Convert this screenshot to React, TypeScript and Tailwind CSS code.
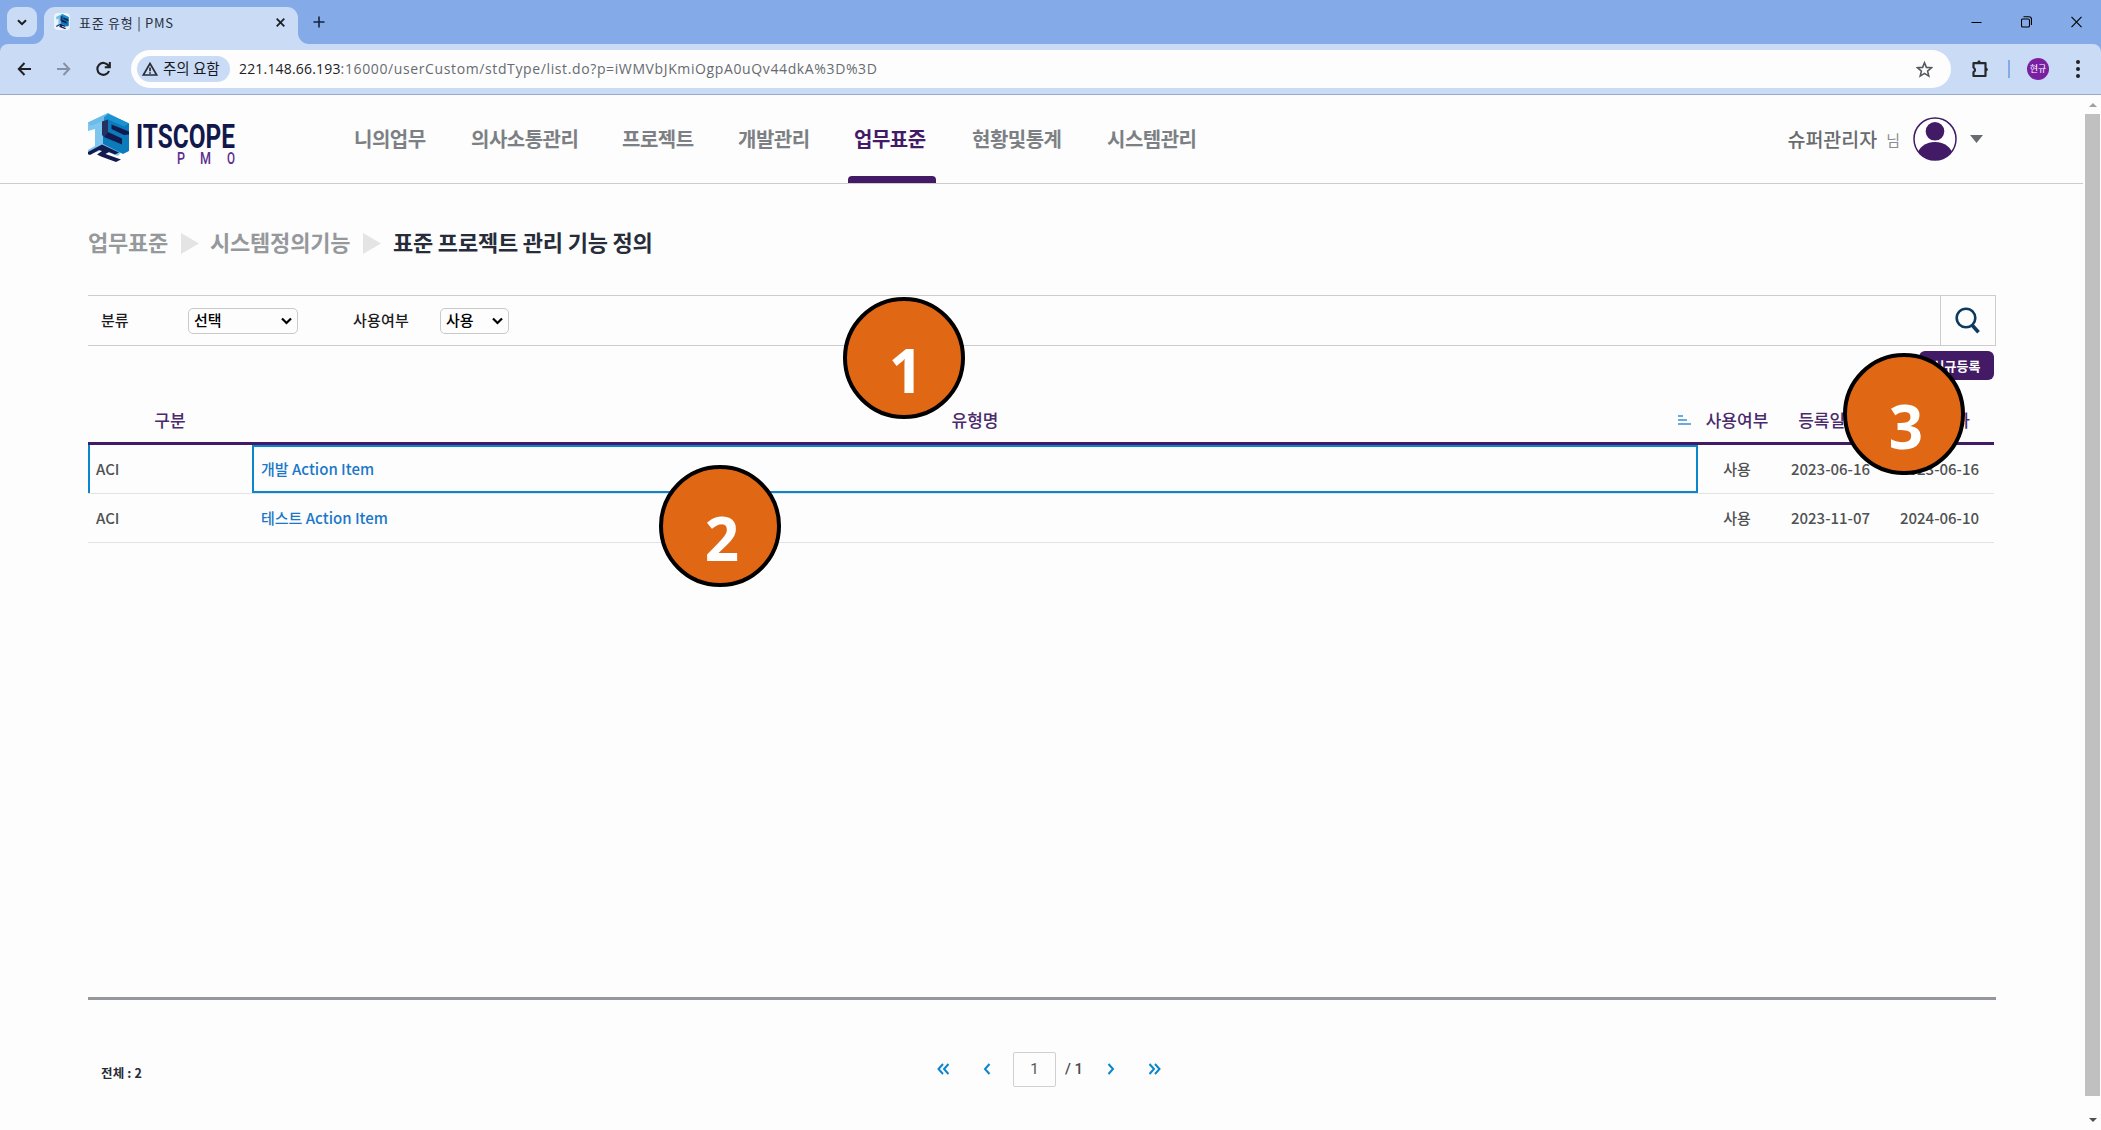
import React from "react";

const KR = "font-['Noto_Sans_CJK_KR',sans-serif]";

const navItems = [
  { label: "니의업무", width: "w-[117px]" },
  { label: "의사소통관리", width: "w-[151px]" },
  { label: "프로젝트", width: "w-[116px]" },
  { label: "개발관리", width: "w-[116px]" },
  { label: "업무표준", width: "w-[118px]", active: true },
  { label: "현황및통계", width: "w-[135px]" },
  { label: "시스템관리", width: "w-[135px]" },
];

const rows = [
  { type: "ACI", name: "개발 Action Item", use: "사용", created: "2023-06-16", updated: "2023-06-16", selected: true },
  { type: "ACI", name: "테스트 Action Item", use: "사용", created: "2023-11-07", updated: "2024-06-10" },
];

function LogoMark({ className }: { className: string }) {
  return (
    <svg className={className} viewBox="0 0 41 49">
      <path d="M0 9.5L20 0L24 3L15 9V31L24 34L34 38L30 43L14 37L0 42V37L7 33V16L0 18Z" fill="#7fc6ef" />
      <path d="M0 9.5L20 0L41 10.5L36 13L20 5.5L3 13Z" fill="#6dbbe9" />
      <path d="M20 1L41 10.5V19L33 16L41 20V38L35 41L15 31V9Z" fill="#0b7bbb" />
      <path d="M20 1L41 10.5L36 13.5L20 6.5L16 8.5V4Z" fill="#1b93d2" />
      <path d="M14 8.5L20 6.5V19L16 24L14 22Z" fill="#27315f" />
      <path d="M23.5 11.5L41 18.5V21.5L36 22L23.5 16Z" fill="#131a50" />
      <path d="M16 24L20 19L34 25.5V31.5L16 24Z" fill="#131a50" />
      <path d="M0 39L14 31.5L31 39.5L27 41.5L21 39L17.5 41L33 46.5L28 49L13 43.5L9 41.5L14 38L11 37L2 42L0 41Z" fill="#131a50" />
    </svg>
  );
}

function Select({ value, className }: { value: string; className: string }) {
  return (
    <div className={`flex h-[26px] items-center justify-between rounded-[5px] border border-[#c9c9c9] pl-[5px] pr-[5px] text-[15px] tracking-[-0.1px] text-black ${className}`}>
      <span>{value}</span>
      <svg width="11" height="8" viewBox="0 0 11 8" fill="none" stroke="#000" strokeWidth="2.2">
        <path d="M1 1.5L5.5 6L10 1.5" />
      </svg>
    </div>
  );
}

function BrowserChrome() {
  return (
    <div>
      <div className="flex h-[44px] items-start bg-[#84abe8]">
        <div className="ml-[7px] mt-[7px] flex size-[30px] items-center justify-center rounded-[9px] bg-[#cadbf5]">
          <svg width="10" height="7" viewBox="0 0 10 7" fill="none" stroke="#1c1c1e" strokeWidth="2">
            <path d="M1 1.2L5 5.2L9 1.2" />
          </svg>
        </div>
        <div className="relative ml-[7px] mt-[7px] flex h-[37px] w-[254px] items-center rounded-t-[11px] bg-[#cadbf5] pl-[10px]">
          <svg className="absolute -left-[11px] bottom-0" width="11" height="11"><path d="M11 0V11H0A11 11 0 0 0 11 0Z" fill="#cadbf5" /></svg>
          <svg className="absolute -right-[11px] bottom-0" width="11" height="11"><path d="M0 0V11H11A11 11 0 0 1 0 0Z" fill="#cadbf5" /></svg>
          <span className="mb-[8px] flex h-[17px] w-[16px] items-center justify-center rounded-[4px] bg-[#eef4fc]">
            <LogoMark className="h-[15px] w-[13px]" />
          </span>
          <span className="mb-[5px] ml-[9px] w-[197px] whitespace-pre text-[13px] tracking-[0.75px] text-[#28303c]">표준 유형 | PMS</span>
          <svg className="mb-[7px] shrink-0" width="9" height="9" viewBox="0 0 9 9" stroke="#1f2126" strokeWidth="1.8"><path d="M.7 .7L8.3 8.3M8.3 .7L.7 8.3" /></svg>
        </div>
        <svg className="ml-[15px] mt-[16px]" width="12" height="12" viewBox="0 0 12 12" stroke="#14233f" strokeWidth="1.6"><path d="M6 .5V11.5M.5 6H11.5" /></svg>
        <div className="ml-auto mr-[19px] mt-[16px] flex items-center gap-[39px]">
          <svg width="11" height="12" viewBox="0 0 11 12" stroke="#000"><path d="M.5 6.5H10.5" /></svg>
          <svg width="11" height="12" viewBox="0 0 11 12" fill="none" stroke="#000" strokeWidth="1.1">
            <rect x=".5" y="3" width="8" height="8" rx="1.3" /><path d="M2.5 .7H8Q10.5 .7 10.5 3.2V9" />
          </svg>
          <svg width="11" height="12" viewBox="0 0 11 12" stroke="#000" strokeWidth="1.1"><path d="M.5 .8L10.5 11.2M10.5 .8L.5 11.2" /></svg>
        </div>
      </div>
      <div className="bg-[#84abe8]">
        <div className="flex h-[51px] items-center rounded-t-[8px] border-b border-[#9ba9cd] bg-[#cadbf5]">
          <svg className="ml-[17px]" width="15" height="14" viewBox="0 0 15 14" fill="none" stroke="#202124" strokeWidth="2"><path d="M7.5 1L1.8 7L7.5 13M2 7H14" /></svg>
          <svg className="ml-[24px]" width="15" height="14" viewBox="0 0 15 14" fill="none" stroke="#8791a5" strokeWidth="2"><path d="M7.5 1L13.2 7L7.5 13M13 7H1" /></svg>
          <svg className="ml-[25px]" width="15" height="16" viewBox="0 0 15 16" fill="none" stroke="#202124" strokeWidth="2.1"><path d="M13 10A6 6 0 1 1 12.4 4.6L13.4 6M13.8 1V6.2H8.8" /></svg>
          <div className="ml-[20px] flex h-[38px] w-[1820px] items-center rounded-full bg-[#fdfdfd] pl-[6px]">
            <div className="flex h-[26px] w-[93px] items-center rounded-full bg-[#cadbf5] pl-[5px]">
              <svg width="16" height="14" viewBox="0 0 16 14" fill="none" stroke="#2a2f38" strokeWidth="1.7"><path d="M8 1.5L14.7 13H1.3ZM8 5.5V9.3M8 10.2V11.8" /></svg>
              <span className="mb-[3px] ml-[5px] whitespace-nowrap text-[14.5px] text-[#15181d]">주의 요함</span>
            </div>
            <span className="mb-[1px] ml-[9px] whitespace-nowrap font-['Open_Sans',sans-serif] text-[14px] text-[#676b70]">
              <span className="tracking-[0.18px] text-[#202124]">221.148.66.193</span>
              <span className="tracking-[0.62px]">:16000/userCustom/stdType/list.do?p=iWMVbJKmiOgpA0uQv44dkA%3D%3D</span>
            </span>
            <svg className="ml-auto mr-[18px]" width="17" height="17" viewBox="0 0 17 17" fill="none" stroke="#565a60" strokeWidth="1.6"><path d="M8.5 1.7L10.4 6.4L15.5 6.8L11.6 10.1L12.8 15.1L8.5 12.4L4.2 15.1L5.4 10.1L1.5 6.8L6.6 6.4Z" /></svg>
          </div>
          <svg className="ml-[20px]" width="19" height="20" viewBox="0 0 19 20"><path d="M2.5 4.2H14.5V17H2.5V13.2Q5.5 11 2.5 8.5Z" fill="none" stroke="#26282c" strokeWidth="2.2" strokeLinejoin="round" /><path d="M6 3.5Q8 -.8 10 3.5ZM15 8.5Q19 10.5 15 12.5Z" fill="#26282c" /></svg>
          <div className="ml-[18px] h-[18px] w-[2px] bg-[#84abe8]" />
          <div className="ml-[17px] flex size-[22px] items-center justify-center rounded-full bg-[#7b1fa2] pb-px text-[9px] leading-none text-white">현규</div>
          <div className="ml-[27px] flex w-[4px] flex-col gap-[3px]">
            <i className="size-[4px] rounded-full bg-[#202124]" /><i className="size-[4px] rounded-full bg-[#202124]" /><i className="size-[4px] rounded-full bg-[#202124]" />
          </div>
        </div>
      </div>
    </div>
  );
}

function Header() {
  return (
    <header className="flex h-[89px] w-[2083px] items-start border-b border-[#cdcdcd]">
      <div className="ml-[88px] mt-[18px] flex w-[266px] items-start">
        <LogoMark className="h-[49px] w-[41px]" />
        <svg className="ml-[7px]" width="104" height="56" viewBox="0 0 104 56">
          <g transform="translate(0 34.5) scale(1 1.45)">
            <text x="0" y="0" textLength="99" lengthAdjust="spacingAndGlyphs" fontFamily="Roboto" fontWeight="700" fontSize="23.5" fill="#12184c">ITSCOPE</text>
          </g>
          <g fontFamily="Roboto" fontWeight="500" fontSize="17" fill="#5c2d91">
            <text x="41" y="51" textLength="8" lengthAdjust="spacingAndGlyphs">P</text>
            <text x="64" y="51" textLength="11" lengthAdjust="spacingAndGlyphs">M</text>
            <text x="91" y="51" textLength="8" lengthAdjust="spacingAndGlyphs">O</text>
          </g>
        </svg>
      </div>
      <nav className="flex h-[88px] text-[20px] font-bold tracking-[-0.5px]">
        {navItems.map((n) => (
          <div key={n.label} className={`relative flex items-center ${n.width} ${n.active ? "text-[#421a66]" : "text-[#7c8084]"}`}>
            <span className="whitespace-nowrap">{n.label}</span>
            {n.active && <span className="absolute -left-[6px] bottom-0 h-[7px] w-[88px] rounded-t-[4px] bg-[#421a66]" />}
          </div>
        ))}
      </nav>
      <div className="ml-auto mr-[100px] flex h-[88px] items-center text-[#686c70]">
        <span className="text-[19.5px] font-medium">슈퍼관리자</span>
        <span className="ml-[9px] mt-[3px] text-[15px] text-[#8a8d90]">님</span>
        <svg className="ml-[13px]" width="44" height="46" viewBox="0 0 44 46">
          <clipPath id="avatar"><circle cx="22" cy="23" r="21" /></clipPath>
          <circle cx="22" cy="23" r="21" fill="#fff" stroke="#421a66" strokeWidth="1.5" />
          <circle cx="22" cy="15.3" r="9.3" fill="#421a66" />
          <ellipse cx="22" cy="39.5" rx="17.5" ry="13.5" fill="#421a66" clipPath="url(#avatar)" />
        </svg>
        <svg className="ml-[13px]" width="13" height="8" viewBox="0 0 13 8"><path d="M0 0H13L6.5 8Z" fill="#686c70" /></svg>
      </div>
    </header>
  );
}

function Arrow() {
  return <svg className="shrink-0" width="18" height="21" viewBox="0 0 18 21"><path d="M0 0L18 10.5L0 21Z" fill="#e4e4e5" /></svg>;
}

function Chevron({ d, className, width }: { d: string; className: string; width: number }) {
  return <svg className={className} width={width} height="12" viewBox={`0 0 ${width} 12`} fill="none" stroke="#0a86cc" strokeWidth="2"><path d={d} /></svg>;
}

function Marker({ n, className }: { n: string; className: string }) {
  return (
    <div className={`absolute flex size-[122px] items-center justify-center rounded-full border-4 border-black bg-[#e06714] font-['Open_Sans',sans-serif] text-[60px] font-bold leading-none text-white ${className}`}>
      <span className="ml-[4px] mt-[23px]">{n}</span>
    </div>
  );
}

export default function App() {
  return (
    <div className={`relative h-[1130px] w-[2101px] overflow-hidden bg-[#fdfdfd] ${KR}`}>
      <BrowserChrome />
      <div className="flex h-[1035px]">
        <div className="w-[2085px]">
          <Header />
          <main className="ml-[88px] w-[1908px]">
            <div className="flex h-[111px] items-center whitespace-nowrap pb-[1px] pt-[8px] text-[22px] font-bold tracking-[-0.2px] text-[#96999c]">
              <span className="mb-[3px] w-[93px]">업무표준</span>
              <Arrow />
              <span className="mb-[3px] ml-[11px] w-[153px]">시스템정의기능</span>
              <Arrow />
              <span className="mb-[3px] ml-[12px] text-[#262c3a]">표준 프로젝트 관리 기능 정의</span>
            </div>
            <div className="flex h-[51px] items-center border-y border-r border-[#cdcdcd] text-[15px] font-medium text-[#1c1c1e]">
              <span className="mb-[1px] ml-[13px] w-[87px]">분류</span>
              <Select value="선택" className="w-[110px]" />
              <span className="mb-[1px] ml-[55px] w-[87px] tracking-[0.2px]">사용여부</span>
              <Select value="사용" className="w-[69px]" />
              <div className="ml-auto flex h-full w-[55px] items-center justify-center border-l border-[#cdcdcd]">
                <svg width="26" height="27" viewBox="0 0 26 27" fill="none" stroke="#0c3a60"><circle cx="11" cy="11" r="9.3" strokeWidth="2.6" /><path d="M17 18L23.5 25.3" strokeWidth="3.6" /></svg>
              </div>
            </div>
            <div className="flex h-[39px] justify-end pr-[2px] pt-[5px]">
              <div className="flex h-[29px] w-[75px] items-center justify-center rounded-[6px] bg-[#421a66] text-[13px] font-bold text-white">신규등록</div>
            </div>
            <div className="w-[1906px] text-[15px] font-medium text-[#505153]">
              <div className="grid h-[60px] grid-cols-[164px_1446px_78px_109px_109px] items-center border-b-[3px] border-[#421a66] pt-[12px] text-center text-[17px] text-[#4a2a6c]">
                <span>구분</span>
                <span className="relative">유형명
                  <svg className="absolute right-[7px] top-[8px]" width="13" height="10" viewBox="0 0 13 10" stroke="#3b8fd6" strokeWidth="1.6"><path d="M0 1H5M0 5H9M0 9H13" /></svg>
                </span>
                <span>사용여부</span>
                <span className="-ml-[2px]">등록일자</span>
                <span className="-ml-[2px]">수정일자</span>
              </div>
              {rows.map((r) => (
                <div key={r.name} className="grid h-[49px] grid-cols-[164px_1446px_78px_109px_109px] border-b border-[#e2e2e2] text-center leading-[47px]">
                  <span className={r.selected ? "border-l-2 border-[#0a86cc] pl-[6px] text-left" : "pl-[8px] text-left"}>{r.type}</span>
                  <span className={r.selected ? "border-2 border-[#0a86cc] pl-[7px] text-left leading-[43px] text-[#1b78c8]" : "pl-[9px] text-left text-[#1b78c8]"}>{r.name}</span>
                  <span>{r.use}</span>
                  <span>{r.created}</span>
                  <span>{r.updated}</span>
                </div>
              ))}
            </div>
            <div className="mt-[454px] h-[3px] bg-[#94989d]" />
            <div className="flex h-[138px] items-center">
              <span className="ml-[13px] mt-[8px] w-[836px] text-[12.5px] font-bold tracking-[0.15px] text-[#262c3a]">전체 : 2</span>
              <Chevron width={12} className="" d="M6 1L1.5 6L6 11M11.5 1L7 6L11.5 11" />
              <Chevron width={8} className="ml-[34px]" d="M6.5 1L2 6L6.5 11" />
              <div className="ml-[22px] flex h-[35px] w-[43px] items-center justify-center rounded-[2px] border border-[#d0d0d0] font-['Roboto',sans-serif] text-[15px] text-[#55585c]">1</div>
              <span className="ml-[9px] font-['Roboto',sans-serif] text-[15px] font-medium text-[#4a4c50]">/ 1</span>
              <Chevron width={8} className="ml-[24px]" d="M1.5 1L6 6L1.5 11" />
              <Chevron width={12} className="ml-[34px]" d="M.5 1L5 6L.5 11M6 1L10.5 6L6 11" />
            </div>
          </main>
        </div>
        <div className="flex w-[15px] flex-col items-center">
          <svg className="mt-[8px]" width="8" height="4"><path d="M4 0L8 4H0Z" fill="#a0a0a0" /></svg>
          <div className="mt-[7px] h-[982px] w-[15px] bg-[#c0c0c0]" />
          <svg className="mt-[22px]" width="8" height="4"><path d="M0 0H8L4 4Z" fill="#505050" /></svg>
        </div>
      </div>
      <Marker n="1" className="left-[843px] top-[297px]" />
      <Marker n="2" className="left-[659px] top-[465px]" />
      <Marker n="3" className="left-[1843px] top-[353px]" />
    </div>
  );
}
